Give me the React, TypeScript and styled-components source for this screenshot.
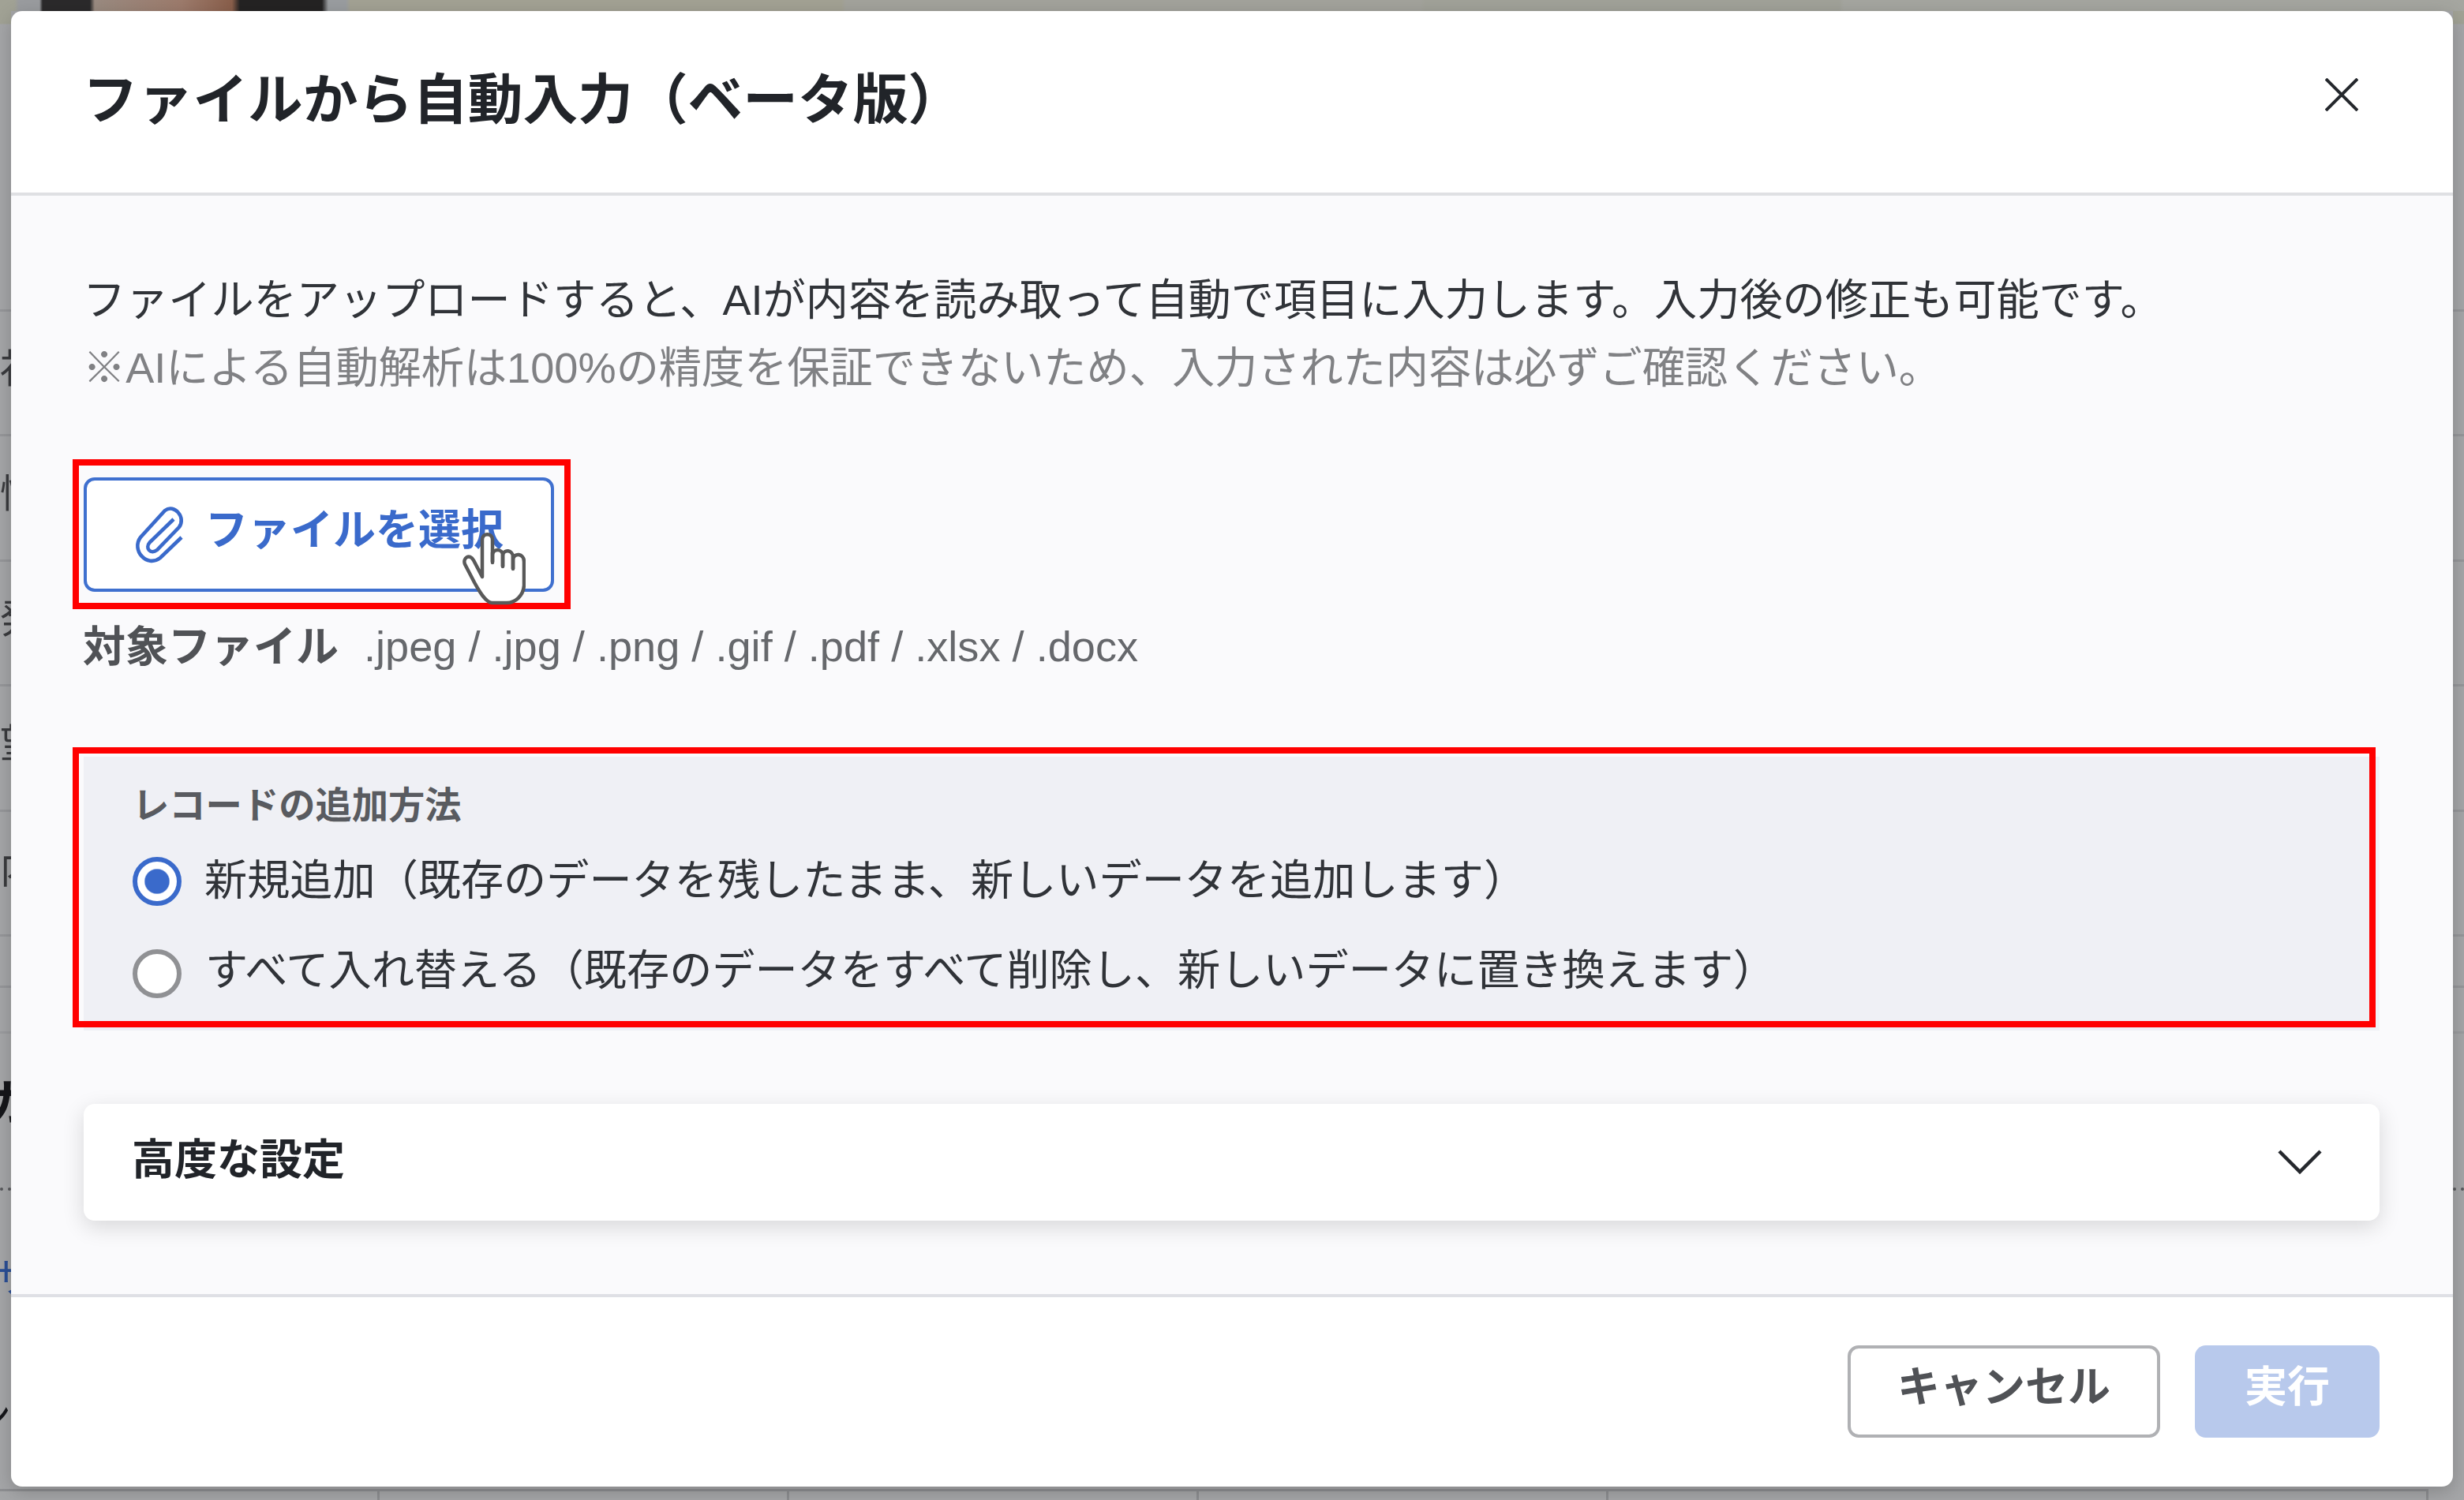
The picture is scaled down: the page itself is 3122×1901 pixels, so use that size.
import React, { FC } from "react";
import styled, { createGlobalStyle } from "styled-components";

const GlobalStyle = createGlobalStyle`
  * {
    box-sizing: border-box;
  }

  body {
    margin: 0;
    overflow: hidden;
    font-family: "Liberation Sans", "Noto Sans CJK JP", sans-serif;
  }
`

interface OptionProps {
  label: string
  checked?: boolean
}

const Option: FC<OptionProps> = (props) => {
  return (
    <OptionRow>
      <Radio $checked={props.checked} />
      <OptionLabel $checked={props.checked}>{props.label}</OptionLabel>
    </OptionRow>
  )
}

const CloseIcon: FC = () => (
  <svg width="42" height="42" viewBox="0 0 42 42" stroke="#25282d" strokeWidth="4">
    <path d="M1 1 L41 41 M41 1 L1 41" />
  </svg>
)

const ChevronIcon: FC = () => (
  <svg width="58" height="34" viewBox="0 0 58 34" fill="none" stroke="#25282d" strokeWidth="4.5">
    <path d="M3 3 L29 29 L55 3" />
  </svg>
)

const ClipIcon: FC = () => (
  <svg width="66" height="74" viewBox="0 0 66 74" fill="none" stroke="#3a6acb" strokeWidth="4.6">
    <path d="M51 17 L21 46 C14 54 22 62 30 56 L58 27 C67 15 52 -3 40 6 L9 40 C-3 56 17 79 34 66 L61 40" />
  </svg>
)

const HandCursor: FC = () => (
  <svg width="80" height="92" viewBox="0 0 80 92" fill="#fff" stroke="#595959" strokeWidth="4.5" strokeLinejoin="round">
    <path d="M25 56 V9 C25 0 38 0 38 9 V38 V28 C39 20 51 20 51 29 V43 V29 C52 20 64 22 64 31 V46 V34 C65 25 78 26 78 37 V67 C77 80 67 89 56 89 H38 C29 89 20 72 15 63 L3 40 C0 32 9 26 14 35 Z" />
    <path d="M38 25 V37 M51 28 V43 M64 30 V46" />
  </svg>
)

const App: FC = () => {
  return (
    <Backdrop>
      <GlobalStyle />
      <TopStrip />
      <Middle>
        <Rail>
          <RailSpace />
          <RailRow>社</RailRow>
          <RailRow>情</RailRow>
          <RailRow>発</RailRow>
          <RailRow>望</RailRow>
          <RailRow>内</RailRow>
          <RailRow $height={65} />
          <RailRow $height={58} />
          <RailHeading>ガ</RailHeading>
          <RailDots />
          <RailLink>サ</RailLink>
          <RailTail>ン</RailTail>
        </Rail>
        <Dialog>
          <Header>
            <Title>ファイルから自動入力（ベータ版）</Title>
            <CloseIcon />
          </Header>
          <Body>
            <Lead>ファイルをアップロードすると、AIが内容を読み取って自動で項目に入力します。入力後の修正も可能です。</Lead>
            <Note>※AIによる自動解析は100%の精度を保証できないため、入力された内容は必ずご確認ください。</Note>
            <FileArea>
              <FileButton>
                <ClipIcon />
                <span>ファイルを選択</span>
              </FileButton>
              <FileHighlight />
              <CursorHolder>
                <HandCursor />
              </CursorHolder>
            </FileArea>
            <FileTypes>
              <strong>対象ファイル</strong>
              <span>.jpeg / .jpg / .png / .gif / .pdf / .xlsx / .docx</span>
            </FileTypes>
            <MethodPanel>
              <MethodTitle>レコードの追加方法</MethodTitle>
              <Option checked label="新規追加（既存のデータを残したまま、新しいデータを追加します）" />
              <Option label="すべて入れ替える（既存のデータをすべて削除し、新しいデータに置き換えます）" />
              <MethodHighlight />
            </MethodPanel>
            <Accordion>
              <AccordionTitle>高度な設定</AccordionTitle>
              <ChevronIcon />
            </Accordion>
          </Body>
          <Footer>
            <CancelButton>キャンセル</CancelButton>
            <RunButton>実行</RunButton>
          </Footer>
        </Dialog>
        <Rail>
          <RailSpace />
          {[0, 1, 2, 3, 4].map((i) => (
            <RailRow key={i} />
          ))}
          <RailRow $height={65} />
          <RailRow $height={58} />
          <RailGap />
          <RailDots />
        </Rail>
      </Middle>
      <BottomStrip>
        <Column $width={481} />
        <Column $width={519} />
        <Column $width={519} />
        <Column $width={519} />
        <Column $width={1039} />
      </BottomStrip>
    </Backdrop>
  )
}

export default App

const Backdrop = styled.div`
  display: flex;
  flex-direction: column;
  width: 3122px;
  height: 1901px;
  background: #a5a6a8;
`

// sliver of the page header and its photo above the dialog
const TopStrip = styled.div`
  height: 14px;
  background: linear-gradient(
    90deg,
    #a1a295 18px,
    #9a9c9f 24px 50px,
    #2b2a2b 54px 114px,
    #9a8b80 120px,
    #9d7b6c 230px,
    #8a5f4b 294px,
    #242323 304px 408px,
    #9a9da0 416px 438px,
    #a3a294 444px 1066px,
    #a3a39c 1072px 1800px,
    #a1a299 1806px 2330px,
    #a5a6a0 2336px
  );
`

const Middle = styled.div`
  display: flex;
  height: 1870px;
`

const Rail = styled.div`
  width: 14px;
  flex-shrink: 0;
  overflow: hidden;
  font-size: 50px;
  white-space: nowrap;
  color: #3a3b3e;
`

const RailSpace = styled.div`
  height: 378px;
  background: linear-gradient(#a1a295 16px, transparent 17px);
`

const RailRow = styled.div<{ $height?: number }>`
  height: ${(p) => p.$height ?? 158.4}px;
  border-top: 3px solid #96979a;
  line-height: 146px;
`

const RailHeading = styled.div`
  height: 198px;
  border-top: 3px solid #9b9c9f;
  font-size: 62px;
  font-weight: bold;
  line-height: 178px;
  text-indent: -18px;
  color: #15161a;
`

const RailGap = styled.div`
  height: 198px;
  border-top: 3px solid #9b9c9f;
`

const RailDots = styled.div`
  height: 4px;
  border-top: 4px dotted #58595c;
`

const RailLink = styled.div`
  height: 214px;
  line-height: 222px;
  text-indent: -8px;
  color: #2b4f96;
`

const RailTail = styled.div`
  line-height: 144px;
  text-indent: -36px;
  color: #15161a;
`

const BottomStrip = styled.div`
  display: flex;
  height: 17px;
  padding-top: 3px;
`

const Column = styled.div<{ $width: number }>`
  width: ${(p) => p.$width}px;
  border-top: 3px solid #8d8e91;
  border-right: 3px solid #8d8e91;
`

const Dialog = styled.div`
  position: relative;
  display: flex;
  flex-direction: column;
  width: 3094px;
  height: 1870px;
  border-radius: 14px;
  background: #fff;
  box-shadow: 0 6px 24px rgba(0, 0, 0, 0.2);
  overflow: hidden;
`

const Header = styled.header`
  display: flex;
  align-items: flex-start;
  justify-content: space-between;
  height: 234px;
  padding: 85px 120px 0 91px;
  border-bottom: 4px solid #dfe0e3;
`

const Title = styled.h1`
  margin: -22px 0 0;
  font-size: 69.7px;
  line-height: 100px;
  color: #212429;
`

const Body = styled.main`
  height: 1392px;
  padding: 89px 93px 0 92px;
  background: #fafafc;
`

const Lead = styled.p`
  margin: 0 0 0 -1px;
  font-size: 54.18px;
  line-height: 86px;
  white-space: nowrap;
  color: #303338;
`

const Note = styled(Lead)`
  color: #808184;
`

const FileArea = styled.div`
  position: relative;
  width: 596px;
  margin-top: 96px;
`

const FileButton = styled.button`
  display: flex;
  align-items: flex-start;
  width: 596px;
  height: 145px;
  padding: 32px 0 0 59px;
  gap: 25px;
  border: 4px solid #3f70cf;
  border-radius: 14px;
  background: #fff;
  font-family: inherit;
  font-size: 54px;
  font-weight: bold;
  line-height: 63px;
  color: #3a6acb;
  white-space: nowrap;
`

const Highlight = styled.div`
  position: absolute;
  left: -14px;
  border: 8px solid #f00;
  pointer-events: none;
`

const FileHighlight = styled(Highlight)`
  top: -23px;
  width: 631px;
  height: 190px;
`

const MethodHighlight = styled(Highlight)`
  top: -12px;
  width: 2918px;
  height: 355px;
`

const CursorHolder = styled.div`
  position: absolute;
  left: 480px;
  top: 70px;
`

const FileTypes = styled.div`
  display: flex;
  gap: 32px;
  height: 86px;
  margin-top: 26px;
  font-size: 54px;
  line-height: 86px;
  white-space: nowrap;
  color: #505256;

  strong {
    margin-left: -1px;
    line-height: 88px;
  }

  span {
    font-size: 54.15px;
    color: #66686c;
  }
`

const MethodPanel = styled.section`
  position: relative;
  height: 347px;
  margin-top: 97px;
  padding: 24px 0 0 62px;
  background: #eff0f5;
`

const MethodTitle = styled.h2`
  margin: 0;
  font-size: 46.3px;
  line-height: 76px;
  color: #595b60;
`

const OptionRow = styled.label`
  display: flex;
  align-items: center;
  height: 62px;
  margin: 27px 0 55px;
`

const Radio = styled.span<{ $checked?: boolean }>`
  flex-shrink: 0;
  width: 62px;
  height: 62px;
  border: 6px solid ${(p) => (p.$checked ? "#3a6acb" : "#909194")};
  border-radius: 50%;
  background: ${(p) => (p.$checked ? "radial-gradient(circle, #3a6acb 15px, #fff 16.5px)" : "#fff")};
`

const OptionLabel = styled.span<{ $checked?: boolean }>`
  margin: ${(p) => (p.$checked ? "-2px 0 0 29px" : "-9px 0 0 30px")};
  font-size: 54.17px;
  line-height: 62px;
  white-space: nowrap;
  color: #303338;
`

const Accordion = styled.div`
  display: flex;
  align-items: center;
  justify-content: space-between;
  height: 148px;
  margin-top: 93px;
  padding: 0 72px 0 61px;
  border-radius: 14px;
  background: #fff;
  box-shadow: 0 8px 28px rgba(0, 0, 0, 0.14);
`

const AccordionTitle = styled.h2`
  margin: 0 0 16px;
  font-size: 54px;
  color: #212429;
`

const Footer = styled.footer`
  display: flex;
  justify-content: flex-end;
  gap: 44px;
  height: 244px;
  padding: 61px 93px 0 0;
  border-top: 4px solid #dfe0e5;
`

const CancelButton = styled.button`
  width: 396px;
  height: 117px;
  padding: 0 0 12px;
  border: 4px solid #b0b1b4;
  border-radius: 14px;
  background: #fff;
  font-family: inherit;
  font-size: 54px;
  font-weight: bold;
  line-height: 96px;
  color: #505256;
`

const RunButton = styled(CancelButton)`
  width: 234px;
  border: 0;
  background: #b8c9ec;
  color: #fff;
`
